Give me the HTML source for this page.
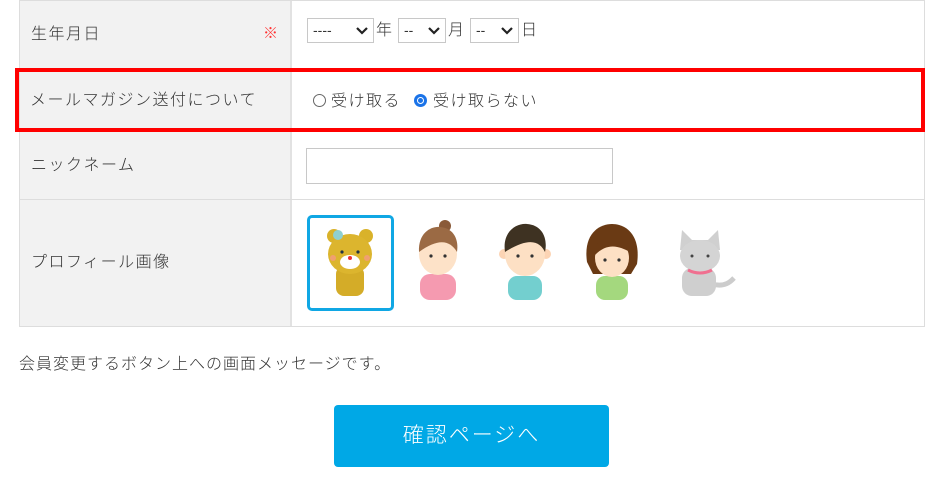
<!DOCTYPE html>
<html><head><meta charset="utf-8"><style>
*{margin:0;padding:0;box-sizing:border-box}
body{width:952px;height:479px;background:#fff;position:relative;overflow:hidden;font-family:"Liberation Sans","Noto Sans CJK JP",sans-serif;color:#333;font-size:16px}
.a{position:absolute}
.lab{background:#f2f2f2}
.t{position:absolute;white-space:nowrap;line-height:20px;letter-spacing:1.5px;font-weight:300}
.sel{position:absolute;top:18px;height:25px;border:1px solid #c8c8c8;background:#fff;font-size:14px;color:#333;padding-left:5px;line-height:23px}
.sel svg{position:absolute;right:5px;top:8px}
</style></head><body>
<div class="a lab" style="left:19px;top:0;width:272px;height:327px"></div>
<div class="a" style="left:19px;top:0;width:1px;height:327px;background:#ddd"></div>
<div class="a" style="left:290px;top:0;width:2px;height:327px;background:#e2e2e2"></div>
<div class="a" style="left:924px;top:0;width:1px;height:327px;background:#ddd"></div>
<div class="a" style="left:19px;top:199px;width:906px;height:1px;background:#ddd"></div>
<div class="a" style="left:19px;top:326px;width:906px;height:1px;background:#ddd"></div>
<div class="a" style="left:19px;top:0;width:906px;height:1px;background:#ddd"></div>

<div class="t" style="left:31px;top:25px">生年月日</div>
<div class="t" style="left:263px;top:24px;color:#f33;font-size:15px">※</div>
<div class="sel" style="left:307px;width:67px">----<svg width="12" height="8" viewBox="0 0 12 8"><path d="M1 1l5 5 5-5" stroke="#222" stroke-width="2.2" fill="none"/></svg></div>
<div class="t" style="left:376px;top:21px">年</div>
<div class="sel" style="left:398px;width:48px">--<svg width="12" height="8" viewBox="0 0 12 8"><path d="M1 1l5 5 5-5" stroke="#222" stroke-width="2.2" fill="none"/></svg></div>
<div class="t" style="left:448px;top:21px">月</div>
<div class="sel" style="left:470px;width:49px">--<svg width="12" height="8" viewBox="0 0 12 8"><path d="M1 1l5 5 5-5" stroke="#222" stroke-width="2.2" fill="none"/></svg></div>
<div class="t" style="left:521px;top:21px">日</div>

<div class="t" style="left:30px;top:91px">メールマガジン送付について</div>
<div class="a" style="left:313px;top:94px;width:13px;height:13px;border:1px solid #666;border-radius:50%"></div>
<div class="t" style="left:331px;top:92px">受け取る</div>
<div class="a" style="left:414px;top:94px;width:13px;height:13px;border-radius:50%;background:#1a73e8"></div>
<div class="a" style="left:417px;top:97px;width:7px;height:7px;border-radius:50%;background:#fff"></div>
<div class="a" style="left:418px;top:98px;width:5px;height:5px;border-radius:50%;background:#1a73e8"></div>
<div class="t" style="left:433px;top:92px">受け取らない</div>
<div class="a" style="left:15px;top:68px;width:910px;height:64px;border:4px solid #f00"></div>

<div class="t" style="left:31px;top:156px">ニックネーム</div>
<div class="a" style="left:306px;top:148px;width:307px;height:36px;border:1px solid #c8c8c8;background:#fff"></div>

<div class="t" style="left:31px;top:253px">プロフィール画像</div>
<div class="a" style="left:307px;top:215px;width:87px;height:96px;border:3px solid #10a7e4;border-radius:5px"></div>
<svg class="a" style="left:320px;top:222px" width="60" height="76" viewBox="0 0 60 76">
<circle cx="14" cy="14" r="7" fill="#d9b22a"/><circle cx="46" cy="14" r="7" fill="#d9b22a"/>
<rect x="16" y="44" width="28" height="30" rx="8" fill="#d4ac28"/>
<ellipse cx="30" cy="32" rx="22" ry="20" fill="#dcb52e"/>
<ellipse cx="30" cy="40" rx="10" ry="7" fill="#fff"/>
<circle cx="30" cy="36" r="2" fill="#e33"/>
<circle cx="22" cy="30" r="1.6" fill="#234"/><circle cx="38" cy="30" r="1.6" fill="#234"/>
<circle cx="13" cy="36" r="3" fill="#f0a070"/><circle cx="47" cy="36" r="3" fill="#f0a070"/>
<circle cx="18" cy="13" r="5" fill="#8fd0d0"/>
</svg>
<svg class="a" style="left:410px;top:218px" width="58" height="82" viewBox="0 0 58 82">
<circle cx="35" cy="8" r="6" fill="#8a5a38"/>
<rect x="10" y="56" width="36" height="26" rx="10" fill="#f59ab0"/>
<ellipse cx="28" cy="36" rx="19" ry="21" fill="#fde2c8"/>
<path d="M9 34C8 14 22 8 30 9 44 10 49 22 47 34 40 22 28 20 9 34Z" fill="#9b6a44"/>
<circle cx="21" cy="38" r="1.6" fill="#333"/><circle cx="35" cy="38" r="1.6" fill="#333"/>
</svg>
<svg class="a" style="left:496px;top:222px" width="58" height="78" viewBox="0 0 58 78">
<rect x="12" y="54" width="34" height="24" rx="9" fill="#73cfcf"/>
<circle cx="8" cy="32" r="5" fill="#fcd4b4"/><circle cx="50" cy="32" r="5" fill="#fcd4b4"/>
<ellipse cx="29" cy="32" rx="20" ry="22" fill="#fde0c4"/>
<path d="M9 30C6 10 20 1 31 2 46 3 52 16 49 30 44 20 34 14 9 30Z" fill="#3e3222"/>
<circle cx="22" cy="34" r="1.6" fill="#333"/><circle cx="36" cy="34" r="1.6" fill="#333"/>
</svg>
<svg class="a" style="left:581px;top:222px" width="62" height="78" viewBox="0 0 62 78">
<path d="M6 40C2 12 18 2 31 2 46 2 60 14 56 42L50 52H12Z" fill="#6a3a14"/>
<rect x="15" y="54" width="32" height="24" rx="9" fill="#a4d87e"/>
<ellipse cx="31" cy="36" rx="17" ry="19" fill="#fde0c4"/>
<path d="M13 34C14 18 24 12 32 12 42 12 48 20 49 30 38 24 26 20 13 34Z" fill="#6a3a14"/>
<circle cx="24" cy="38" r="1.6" fill="#333"/><circle cx="38" cy="38" r="1.6" fill="#333"/>
</svg>
<svg class="a" style="left:672px;top:228px" width="66" height="70" viewBox="0 0 66 70">
<path d="M40 56C54 60 60 52 62 50" stroke="#ccc" stroke-width="5" fill="none"/>
<rect x="10" y="40" width="34" height="28" rx="10" fill="#cfcfcf"/>
<path d="M8 22L10 2 20 12H36L46 2 48 22Z" fill="#d0d0d0"/>
<ellipse cx="28" cy="28" rx="20" ry="16" fill="#d4d4d4"/>
<circle cx="20" cy="28" r="1.5" fill="#444"/><circle cx="36" cy="28" r="1.5" fill="#444"/>
<path d="M16 42Q28 48 40 42" stroke="#f07090" stroke-width="3" fill="none"/>
</svg>

<div class="t" style="left:19px;top:355px;font-size:16px;letter-spacing:1px">会員変更するボタン上への画面メッセージです。</div>
<div class="a" style="left:334px;top:405px;width:275px;height:62px;background:#00a8e6;border-radius:4px;color:#fff;font-size:21px;letter-spacing:2px;text-align:center;line-height:62px;font-weight:300">確認ページへ</div>
</body></html>
